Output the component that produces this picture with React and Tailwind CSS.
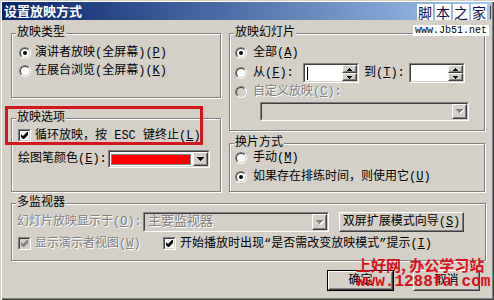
import React from 'react';

const dim = 'text-[#808080] [text-shadow:1px_1px_0_#fff]';

function Radio({ checked, disabled }) {
  return (
    <span className="block w-[12px] h-[12px] shrink-0 rounded-full border border-t-[#808080] border-l-[#808080] border-r-white border-b-white">
      <span
        className={`flex items-center justify-center w-full h-full rounded-full border border-t-[#404040] border-l-[#404040] border-r-[#d4d0c8] border-b-[#d4d0c8] ${
          disabled ? 'bg-[#d4d0c8]' : 'bg-white'
        }`}
      >
        {checked && <span className="block w-[4px] h-[4px] rounded-full bg-black" />}
      </span>
    </span>
  );
}

function Check({ checked, disabled }) {
  return (
    <span className="block w-[13px] h-[13px] shrink-0 border border-t-[#808080] border-l-[#808080] border-r-white border-b-white">
      <span
        className={`block w-full h-full border border-t-[#404040] border-l-[#404040] border-r-[#d4d0c8] border-b-[#d4d0c8] ${
          disabled ? 'bg-[#d4d0c8]' : 'bg-white'
        }`}
      >
        {checked && (
          <svg width="9" height="9" viewBox="0 0 9 9" className="block">
            <polygon
              points="1,3 3,5 7,1 8,1 8,4 4,8 3,8 1,6"
              fill={disabled ? '#808080' : '#000'}
            />
          </svg>
        )}
      </span>
    </span>
  );
}

function Sunken({ className, inner = 'bg-white', children }) {
  return (
    <div className={`border border-t-[#808080] border-l-[#808080] border-r-white border-b-white ${className}`}>
      <div className={`flex w-full h-full border border-t-[#404040] border-l-[#404040] border-r-[#d4d0c8] border-b-[#d4d0c8] ${inner}`}>
        {children}
      </div>
    </div>
  );
}

function Raised({ className, children }) {
  return (
    <div className={`bg-[#d4d0c8] border border-t-white border-l-white border-r-[#404040] border-b-[#404040] ${className}`}>
      <div className="flex items-center justify-center w-full h-full border border-t-[#d4d0c8] border-l-[#d4d0c8] border-r-[#808080] border-b-[#808080]">
        {children}
      </div>
    </div>
  );
}

function DownArrow({ disabled }) {
  const c = disabled ? '#808080' : '#000';
  return (
    <svg width="8" height="5" viewBox="0 0 8 5" className="block">
      {disabled && (
        <g fill="#fff">
          <rect x="1" y="1" width="7" height="1" />
          <rect x="2" y="2" width="5" height="1" />
          <rect x="3" y="3" width="3" height="1" />
          <rect x="4" y="4" width="1" height="1" />
        </g>
      )}
      <g fill={c}>
        <rect x="0" y="0" width="7" height="1" />
        <rect x="1" y="1" width="5" height="1" />
        <rect x="2" y="2" width="3" height="1" />
        <rect x="3" y="3" width="1" height="1" />
      </g>
    </svg>
  );
}

function Tri({ up }) {
  return (
    <svg width="5" height="3" viewBox="0 0 5 3" className="block">
      {up ? (
        <g fill="#000">
          <rect x="2" y="0" width="1" height="1" />
          <rect x="1" y="1" width="3" height="1" />
          <rect x="0" y="2" width="5" height="1" />
        </g>
      ) : (
        <g fill="#000">
          <rect x="0" y="0" width="5" height="1" />
          <rect x="1" y="1" width="3" height="1" />
          <rect x="2" y="2" width="1" height="1" />
        </g>
      )}
    </svg>
  );
}

function SpinBox({ caret }) {
  return (
    <Sunken className="w-[56px] h-[20px]">
      <div className="flex-1 flex items-center pl-[2px]">
        {caret && <span className="block w-[1px] h-[13px] bg-black" />}
      </div>
      <div className="flex flex-col w-[15px]">
        <Raised className="h-[8px]"><Tri up /></Raised>
        <Raised className="h-[8px]"><Tri /></Raised>
      </div>
    </Sunken>
  );
}

function Group({ label, className, children }) {
  return (
    <div className={`relative border border-[#808080] shadow-[inset_1px_1px_0_#fff,1px_1px_0_#fff] ${className}`}>
      <span className="absolute -top-[8px] left-[4px] px-[1px] bg-[#d4d0c8] leading-[14px]">{label}</span>
      {children}
    </div>
  );
}

function Row({ className = '', children }) {
  return <div className={`flex items-center h-[12px] leading-[12px] whitespace-nowrap ${className}`}>{children}</div>;
}

export default function App() {
  return (
    <div className="relative w-[494px] h-[300px] overflow-hidden bg-[#d4d0c8] text-black text-[12px] font-['Liberation_Mono','Noto_Sans_CJK_SC',monospace] shadow-[inset_1px_1px_0_#d4d0c8,inset_2px_2px_0_#fff,inset_-1px_-1px_0_#404040,inset_-2px_-2px_0_#808080]">
      {/* title bar */}
      <div className="pt-[2px] px-[2px]">
        <div className="h-[18px] flex items-center pl-[2px] bg-linear-to-r from-[#0a246a] to-[#a6caf0] text-white font-bold text-[13px] font-['Noto_Sans_CJK_SC',sans-serif]">
          设置放映方式
        </div>
      </div>

      <div className="flex gap-[8px] pl-[11px] mt-[13px]">
        {/* left column */}
        <div className="w-[210px] flex flex-col">
          <Group label="放映类型" className="h-[65px] pt-[13px] pl-[7px]">
            <div className="flex flex-col gap-[6px]">
              <Row><Radio checked /><span className="ml-[4px]">演讲者放映(全屏幕)(<u>P</u>)</span></Row>
              <Row><Radio /><span className="ml-[4px]">在展台浏览(全屏幕)(<u>K</u>)</span></Row>
            </div>
          </Group>

          <Group label="放映选项" className="h-[74px] mt-[20px] pt-[10px] pl-[6px]">
            <Row className="h-[13px]"><Check checked /><span className="ml-[4px]">循环放映，按 ESC 键终止(<u>L</u>)</span></Row>
            <div className="flex items-center mt-[8px] h-[18px]">
              <span className="w-[90px] whitespace-nowrap">绘图笔颜色(<u>E</u>):</span>
              <Sunken className="w-[102px] h-[18px]">
                <div className="flex-1 flex items-center pl-[1px] pr-[2px]">
                  <span className="block w-full h-[11px] bg-[#ff0000] border border-[#808080]" />
                </div>
                <Raised className="w-[15px] h-full"><DownArrow /></Raised>
              </Sunken>
            </div>
          </Group>
        </div>

        {/* right column */}
        <div className="w-[256px] flex flex-col">
          <Group label="放映幻灯片" className="h-[98px] pt-[13px] pl-[5px]">
            <Row><Radio checked /><span className="ml-[6px]">全部(<u>A</u>)</span></Row>
            <div className="flex items-center h-[20px] mt-[4px] whitespace-nowrap">
              <Radio />
              <span className="ml-[6px] w-[50px]">从(<u>F</u>):</span>
              <SpinBox caret />
              <span className="ml-[5px] w-[45px]">到(<u>T</u>):</span>
              <SpinBox />
            </div>
            <Row className="mt-[3px]"><Radio disabled /><span className={`ml-[6px] ${dim}`}>自定义放映(<u>C</u>):</span></Row>
            <Sunken className="ml-[25px] mt-[4px] w-[209px] h-[19px]" inner="bg-[#d4d0c8] justify-end">
              <Raised className="w-[15px] h-full"><DownArrow disabled /></Raised>
            </Sunken>
          </Group>

          <Group label="换片方式" className="h-[49px] mt-[12px] pt-[8px] pl-[5px]">
            <div className="flex flex-col gap-[7px]">
              <Row><Radio /><span className="ml-[6px]">手动(<u>M</u>)</span></Row>
              <Row><Radio checked /><span className="ml-[6px]">如果存在排练时间，则使用它(<u>U</u>)</span></Row>
            </div>
          </Group>
        </div>
      </div>

      {/* multi monitor */}
      <Group label="多监视器" className="ml-[11px] mt-[11px] w-[475px] h-[58px] pt-[8px] pl-[5px]">
        <div className="flex items-center h-[20px] whitespace-nowrap">
          <span className={`w-[126px] ${dim}`}>幻灯片放映显示于(<u>O</u>):</span>
          <Sunken className="w-[186px] h-[20px]" inner="bg-[#d4d0c8] items-center">
            <span className={`flex-1 pl-[3px] text-[13px] leading-[14px] ${dim}`}>主要监视器</span>
            <Raised className="w-[15px] h-full"><DownArrow disabled /></Raised>
          </Sunken>
          <Raised className="ml-[10px] w-[125px] h-[20px]">
            <span className="leading-[12px]">双屏扩展模式向导(<u>S</u>)</span>
          </Raised>
        </div>
        <div className="flex items-center mt-[5px] h-[13px] whitespace-nowrap">
          <div className="flex items-center w-[145px] ml-[1px]">
            <Check checked disabled />
            <span className={`ml-[4px] ${dim}`}>显示演示者视图(<u>W</u>)</span>
          </div>
          <Check checked />
          <span className="ml-[4px]">开始播放时出现“是否需改变放映模式”提示(<u>I</u>)</span>
        </div>
      </Group>

      {/* buttons */}
      <div className="flex justify-end gap-[19px] pr-[14px] mt-[9px]">
        <div className="w-[67px] h-[21px] border border-black">
          <Raised className="w-full h-full">确定</Raised>
        </div>
        <Raised className="w-[67px] h-[21px]">取消</Raised>
      </div>

      {/* red highlight around 放映选项 */}
      <div className="absolute left-[5px] top-[106px] w-[198px] h-[39px] border-[3px] border-[#d3161c]" />

      {/* watermarks */}
      <div className="absolute left-[417px] top-[4px] flex items-center gap-[2px] font-['Noto_Sans_CJK_SC',sans-serif] text-[14px] text-[#101050]">
        {['脚', '本', '之', '家'].map(c => (
          <span key={c} className="w-[16px] h-[16px] bg-white flex items-center justify-center leading-[14px]">{c}</span>
        ))}
        <span className="ml-[1px] w-[1px] h-[13px] bg-[#404040]" />
      </div>
      <div className="absolute left-[413px] top-[25px] px-[2px] bg-white text-[10px] leading-[11px] font-['Liberation_Mono',monospace] text-black">
        www.Jb51.net
      </div>
      <div className="absolute left-[356px] top-[256px] text-[15px] leading-[17px] font-bold text-[#d8101a] font-['Noto_Sans_CJK_SC',sans-serif] whitespace-nowrap">
        上好网, 办公学习站
      </div>
      <div className="absolute left-[356px] top-[274px] text-[16px] leading-[17px] font-bold text-[#d8101a] font-['Liberation_Mono',monospace] whitespace-nowrap">
        www.1288fa.com
      </div>
    </div>
  );
}
